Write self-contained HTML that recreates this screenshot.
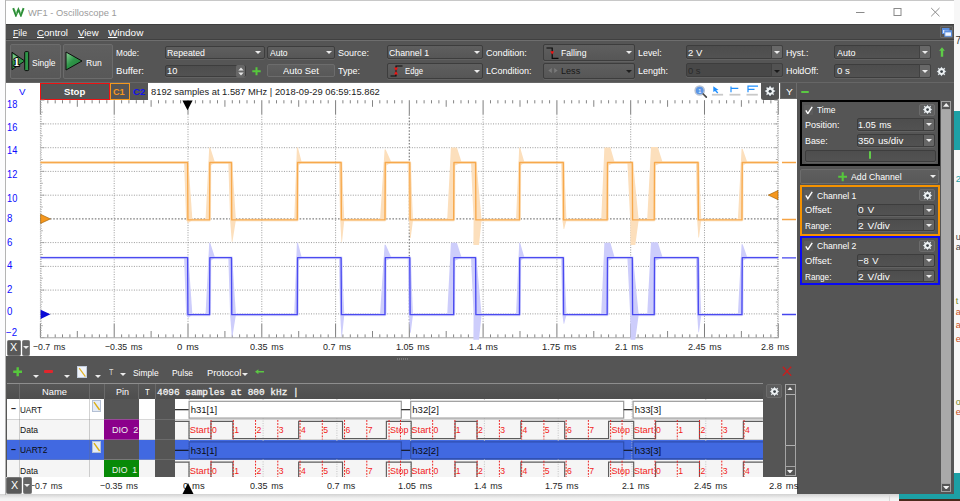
<!DOCTYPE html><html><head><meta charset="utf-8"><title>WF1 - Oscilloscope 1</title><style>
*{box-sizing:border-box;margin:0;padding:0}
html,body{width:960px;height:501px;overflow:hidden;background:#fff;font-family:"Liberation Sans", sans-serif;font-size:9.5px;color:#fff}
.a{position:absolute}
#win{position:absolute;left:6px;top:0;width:948px;height:494.3px;background:#555;overflow:hidden}
.t{position:absolute;white-space:nowrap;line-height:1;transform-origin:0 0}
.btn{position:absolute;background:linear-gradient(#5f5f5f,#585858);border:1px solid #6c6c6c;border-radius:2px}
.cb{position:absolute;background:linear-gradient(#4d4d4d,#525252);border:1px solid #3d3d3d;border-radius:2px;box-shadow:0 1px 0 #626262}
.cbb{position:absolute;background:linear-gradient(#5f5f5f,#565656);border:1px solid #3d3d3d;border-radius:2px;box-shadow:0 1px 0 #626262}
.ar{position:absolute;width:0;height:0;border-left:3.1px solid transparent;border-right:3.1px solid transparent;border-top:3.4px solid #f0f0f0}
</style></head><body>
<div class="a" style="left:0;top:0;width:6px;height:501px;background:#fcfcfd"></div>
<div class="a" style="left:954px;top:0;width:6px;height:501px;background:#f7f7f7"></div>
<div class="a" style="left:0;top:494px;width:960px;height:7px;background:linear-gradient(#d2d2d2,#f0f0f0 60%,#f6f6f6)"></div>
<div class="a" style="left:889px;top:494px;width:1px;height:7px;background:#d8d8d8"></div>
<div class="a" style="left:898.5px;top:494px;width:62px;height:5.3px;background:#1da0a5"></div>
<div class="a" style="left:898.5px;top:499.3px;width:62px;height:2px;background:#4a2a1c"></div>
<div class="a" style="left:954px;top:111px;width:6px;height:39px;background:#1da0a5"></div>
<div class="a" style="left:954px;top:473px;width:6px;height:26.3px;background:#1da0a5"></div>
<div class="t" style="left:955.5px;top:36px;font-size:10px;color:#333">7</div>
<div class="t" style="left:955.8px;top:175px;font-size:9px;color:#1da0a5">2</div>
<div class="t" style="left:955.8px;top:233px;font-size:9px;color:#444">u</div>
<div class="t" style="left:955.8px;top:243px;font-size:9px;color:#444">a</div>
<div class="t" style="left:955.8px;top:297px;font-size:9px;color:#7a8a2a">t</div>
<div class="t" style="left:955.8px;top:308px;font-size:9px;color:#c8501e">a</div>
<div class="t" style="left:955.8px;top:321px;font-size:9px;color:#c8501e">a</div>
<div class="t" style="left:955.8px;top:335px;font-size:9px;color:#c8501e">e</div>
<div class="t" style="left:955.8px;top:398px;font-size:9px;color:#7a8a2a">o</div>
<div class="t" style="left:955.8px;top:408px;font-size:9px;color:#c8501e">e</div>
<div class="a" style="left:5.2px;top:0;width:1px;height:495px;background:#b4b4b4"></div>
<div id="win">
<div class="a" style="left:0px;top:0px;width:948.5px;height:24px;background:#fff"></div>
<div class="a" style="left:0;top:0;width:948.5px;height:1px;background:#c8c8c8"></div>
<div class="t" style="left:21.6px;top:7.76px;font-size:9.5px;color:#9b9b9b;transform:scaleX(0.983);">WF1 - Oscilloscope 1</div>
<svg class="a" style="left:5.5px;top:7px" width="13" height="10" viewBox="0 0 13 10"><path d="M1.2 1.2 L3.9 8.3 L6.4 2.6 L8.9 8.3 L11.6 1.2" fill="none" stroke="#2e8f38" stroke-width="2"/><path d="M3.2 3.2 L4.8 6.8 M8.2 6.6 L9.6 3" stroke="#9ad79a" stroke-width="0.7"/></svg>
<svg class="a" style="left:844px;top:5px" width="95" height="14" viewBox="0 0 95 14"><g stroke="#8a8a8a" stroke-width="1" fill="none"><path d="M6 7.5 H14.5"/><rect x="44" y="3.5" width="7" height="7"/><path d="M81.2 3 L89.5 11.3 M89.5 3 L81.2 11.3"/></g></svg>
<div class="a" style="left:0px;top:24px;width:948.5px;height:16.2px;background:#505050;border-top:1px solid #3e3e3e;border-bottom:1px solid #404040"></div>
<div class="t" style="left:7px;top:28.36px;font-size:9.5px;color:#fff;transform:scaleX(0.915);"><u>F</u>ile</div>
<div class="t" style="left:31px;top:28.36px;font-size:9.5px;color:#fff;transform:scaleX(1.012);"><u>C</u>ontrol</div>
<div class="t" style="left:72.2px;top:28.36px;font-size:9.5px;color:#fff;transform:scaleX(1.009);"><u>V</u>iew</div>
<div class="t" style="left:102px;top:28.36px;font-size:9.5px;color:#fff;transform:scaleX(1.045);"><u>W</u>indow</div>
<div class="a" style="left:934px;top:26px;width:13px;height:11.6px;background:#555;border:1px solid #6a6a6a;border-radius:1px"></div>
<svg class="a" style="left:936px;top:27.5px" width="10" height="9" viewBox="0 0 10 9"><rect x="0.5" y="0.5" width="6.5" height="5" fill="#dbe7fb" stroke="#5b8fe0"/><rect x="0.5" y="0.5" width="6.5" height="1.5" fill="#5b8fe0"/><rect x="2.8" y="2.8" width="6.7" height="5.5" fill="#f2f6fd" stroke="#5b8fe0"/><rect x="2.8" y="2.8" width="6.7" height="1.6" fill="#5b8fe0"/></svg>
<div class="a" style="left:0px;top:40.2px;width:948.5px;height:43.1px;background:#555;border-top:1px solid #6e6e6e;border-bottom:1px solid #666"></div>
<div class="btn" style="left:3.8px;top:44px;width:51.6px;height:34.8px;"></div>
<div class="btn" style="left:57.2px;top:44px;width:49.8px;height:34.8px;"></div>
<div class="t" style="left:26px;top:57.56px;font-size:9.5px;color:#fff;transform:scaleX(0.890);">Single</div>
<div class="t" style="left:80.3px;top:57.56px;font-size:9.5px;color:#fff;transform:scaleX(0.901);">Run</div>
<svg class="a" style="left:4.5px;top:49px" width="20" height="24" viewBox="0 0 20 24"><path d="M1 3.3 L13.7 12 L1 20.7 Z" fill="#2e9548" stroke="#0c0c0c" stroke-width="1"/><path d="M1.8 5 L8 9.2 L1.8 12 Z" fill="#8fd39a" opacity="0.75"/><rect x="13.7" y="2.6" width="4" height="19" rx="0.9" fill="#2e9548" stroke="#0c0c0c" stroke-width="1"/><text x="2.2" y="16.6" font-family='"Liberation Serif",serif' font-weight="bold" font-size="13" fill="#fff" stroke="#0a0a0a" stroke-width="2" stroke-linejoin="round" paint-order="stroke">1</text></svg>
<svg class="a" style="left:59px;top:51px" width="19" height="20" viewBox="0 0 19 20"><defs><linearGradient id="gr" x1="0" y1="0" x2="1" y2="1"><stop offset="0" stop-color="#8fd39a"/><stop offset="0.45" stop-color="#2e9548"/><stop offset="1" stop-color="#237a38"/></linearGradient></defs><path d="M1 1 L17 10 L1 19 Z" fill="url(#gr)" stroke="#0c0c0c" stroke-width="1"/></svg>
<div class="t" style="left:110px;top:47.76px;font-size:9.5px;color:#fff;transform:scaleX(0.871);">Mode:</div>
<div class="t" style="left:110px;top:66.26px;font-size:9.5px;color:#fff;transform:scaleX(1.007);">Buffer:</div>
<div class="cbb" style="left:158.7px;top:45.6px;width:100.3px;height:13.2px;"></div>
<div class="t" style="left:161px;top:47.76px;font-size:9.5px;color:#fff;transform:scaleX(0.922);">Repeated</div>
<div class="ar" style="left:249.4px;top:51.3px;border-top-color:#ececec"></div>
<div class="cb" style="left:158.7px;top:64.6px;width:81.1px;height:12.6px;"></div>
<div class="t" style="left:160.7px;top:66.26px;font-size:9.5px;color:#fff;transform:scaleX(0.975);">10</div>
<div class="a" style="left:229.8px;top:65.2px;width:9.4px;height:11.4px;background:#666;border-radius:1.5px"></div>
<svg class="a" style="left:231.5px;top:66.5px" width="6" height="9" viewBox="0 0 6 9"><path d="M0.3 3.4 L3 0.6 L5.7 3.4 Z M0.3 5.6 L3 8.4 L5.7 5.6 Z" fill="#e4e4e4"/></svg>
<svg class="a" style="left:245.5px;top:67.3px" width="9" height="8.5" viewBox="0 0 9 8.5"><path d="M4.5 0.2 V8.3 M0.3 4.25 H8.7" stroke="#56c83c" stroke-width="2"/></svg>
<div class="cbb" style="left:261px;top:45.6px;width:68.3px;height:13.2px;"></div>
<div class="t" style="left:264px;top:47.76px;font-size:9.5px;color:#fff;transform:scaleX(0.896);">Auto</div>
<div class="ar" style="left:320.1px;top:51.3px;border-top-color:#ececec"></div>
<div class="btn" style="left:261px;top:64.2px;width:68.3px;height:13.3px;"></div>
<div class="t" style="left:277.3px;top:66.26px;font-size:9.5px;color:#fff;transform:scaleX(0.985);">Auto Set</div>
<div class="t" style="left:332px;top:47.76px;font-size:9.5px;color:#fff;transform:scaleX(0.947);">Source:</div>
<div class="t" style="left:332px;top:66.26px;font-size:9.5px;color:#fff;transform:scaleX(0.947);">Type:</div>
<div class="cbb" style="left:381px;top:45.4px;width:96.3px;height:13.4px;"></div>
<div class="t" style="left:383.2px;top:47.76px;font-size:9.5px;color:#fff;transform:scaleX(0.924);">Channel 1</div>
<div class="ar" style="left:467.9px;top:51.3px;border-top-color:#ececec"></div>
<div class="cbb" style="left:381px;top:63px;width:96.3px;height:15.6px;"></div>
<div class="t" style="left:399px;top:66.26px;font-size:9.5px;color:#fff;transform:scaleX(0.811);">Edge</div>
<div class="ar" style="left:467.9px;top:70px;border-top-color:#ececec"></div>
<svg class="a" style="left:384.3px;top:65px" width="13" height="12" viewBox="0 0 13 12"><path d="M0.5 11 H6 V1 H12.5" fill="none" stroke="#0a0a0a" stroke-width="1.1"/><path d="M4 2.6 H8 L6 6 Z M4 9.4 H8 L6 6 Z" fill="#f01414"/></svg>
<div class="t" style="left:479.8px;top:47.76px;font-size:9.5px;color:#fff;transform:scaleX(0.956);">Condition:</div>
<div class="t" style="left:479.8px;top:66.26px;font-size:9.5px;color:#fff;transform:scaleX(0.947);">LCondition:</div>
<div class="cbb" style="left:537px;top:44.2px;width:92.3px;height:16.4px;"></div>
<div class="t" style="left:554.8px;top:47.76px;font-size:9.5px;color:#fff;transform:scaleX(0.911);">Falling</div>
<div class="ar" style="left:619.9px;top:51.3px;border-top-color:#ececec"></div>
<svg class="a" style="left:540.3px;top:46.5px" width="13" height="12.5" viewBox="0 0 13 12.5"><path d="M0.5 1 H6.2 V11.3 H12.5" fill="none" stroke="#0a0a0a" stroke-width="1.2"/><path d="M4.2 4.2 H8.2 L6.2 7.6 Z" fill="#f01414"/></svg>
<div class="cbb" style="left:537px;top:63px;width:92.3px;height:16.2px;"></div>
<div class="t" style="left:554.8px;top:66.26px;font-size:9.5px;color:#181818;transform:scaleX(0.957);">Less</div>
<div class="ar" style="left:619.9px;top:70px;border-top-color:#1e1e1e"></div>
<svg class="a" style="left:541.5px;top:66.5px" width="10" height="7" viewBox="0 0 10 7"><path d="M0.3 3.5 L3.8 1 V6 Z M9.7 3.5 L6.2 1 V6 Z" fill="#7a7a7a"/></svg>
<div class="t" style="left:632px;top:47.76px;font-size:9.5px;color:#fff;transform:scaleX(0.935);">Level:</div>
<div class="t" style="left:632px;top:66.26px;font-size:9.5px;color:#fff;transform:scaleX(0.947);">Length:</div>
<div class="cb" style="left:679.8px;top:45.3px;width:97.5px;height:13.9px;"></div>
<div class="t" style="left:682.3px;top:47.76px;font-size:9.5px;color:#fff;transform:scaleX(0.996);">2 V</div>
<div class="a" style="left:764.8px;top:45.3px;width:12.5px;height:13.9px;background:#686868;border:1px solid #414141;border-radius:0 2px 2px 0"></div>
<div class="ar" style="left:767.9px;top:51.3px;border-top-color:#ececec"></div>
<div class="cb" style="left:679.8px;top:63.3px;width:97.5px;height:14.2px;background:#484848"></div>
<div class="t" style="left:682.3px;top:66.26px;font-size:9.5px;color:#2a2a2a;transform:scaleX(0.986);">0 s</div>
<div class="a" style="left:764.8px;top:63.3px;width:12.5px;height:14.2px;background:#525252;border:1px solid #414141;border-radius:0 2px 2px 0"></div>
<div class="ar" style="left:767.9px;top:69.5px;border-top-color:#1a1a1a"></div>
<div class="t" style="left:779.8px;top:47.76px;font-size:9.5px;color:#fff;transform:scaleX(0.927);">Hyst.:</div>
<div class="t" style="left:779.8px;top:66.26px;font-size:9.5px;color:#fff;transform:scaleX(0.937);">HoldOff:</div>
<div class="cb" style="left:828.3px;top:45.1px;width:96.7px;height:14.3px;"></div>
<div class="t" style="left:830.5px;top:47.76px;font-size:9.5px;color:#fff;transform:scaleX(0.947);">Auto</div>
<div class="a" style="left:913px;top:45.1px;width:12px;height:14.3px;background:#686868;border:1px solid #414141;border-radius:0 2px 2px 0"></div>
<div class="ar" style="left:915.9px;top:51.3px;border-top-color:#ececec"></div>
<div class="cb" style="left:828.3px;top:63.6px;width:96.7px;height:14.2px;"></div>
<div class="t" style="left:830.5px;top:66.26px;font-size:9.5px;color:#fff;transform:scaleX(1.018);">0 s</div>
<div class="a" style="left:913px;top:63.6px;width:12px;height:14.2px;background:#686868;border:1px solid #414141;border-radius:0 2px 2px 0"></div>
<div class="ar" style="left:915.9px;top:69.8px;border-top-color:#ececec"></div>
<svg class="a" style="left:932.6px;top:46.8px" width="6" height="10" viewBox="0 0 6 10"><path d="M3 0.2 L5.9 3.8 H4.2 V9.8 H1.8 V3.8 H0.1 Z" fill="#5ecb48"/></svg>
<svg class="a" style="left:930px;top:65.6px" width="11" height="11" viewBox="0 0 13.2 13.4"><path d="M5.46 2.35 L5.51 0.90 L7.69 0.90 L7.74 2.35 L8.88 2.82 L9.93 1.83 L11.47 3.37 L10.48 4.42 L10.95 5.56 L12.40 5.61 L12.40 7.79 L10.95 7.84 L10.48 8.98 L11.47 10.03 L9.93 11.57 L8.88 10.58 L7.74 11.05 L7.69 12.50 L5.51 12.50 L5.46 11.05 L4.32 10.58 L3.27 11.57 L1.73 10.03 L2.72 8.98 L2.25 7.84 L0.80 7.79 L0.80 5.61 L2.25 5.56 L2.72 4.42 L1.73 3.37 L3.27 1.83 L4.32 2.82 Z" fill="#edf1f3" stroke="#2a2f33" stroke-width="0.6" stroke-linejoin="round"/><circle cx="6.7" cy="6.8" r="1.7" fill="#3b4348"/></svg>
<div class="a" style="left:0px;top:83.3px;width:791px;height:273.7px;background:#fff"></div>
<div class="t" style="left:13.3px;top:86.7px;font-size:9.8px;color:#0c0cff;transform:scaleX(0.994);">V</div>
<div class="a" style="left:34.3px;top:83.3px;width:69.7px;height:17.1px;background:#555;border:1.2px solid #ee1111"></div>
<div class="t" style="left:58.2px;top:87.46px;font-size:9.5px;color:#fff;font-weight:bold;transform:scaleX(1.009);">Stop</div>
<div class="a" style="left:103.7px;top:83.3px;width:20px;height:17.1px;background:#555;border:1.2px solid #f5971d"></div>
<div class="t" style="left:107.3px;top:87.46px;font-size:9.5px;color:#f5971d;font-weight:bold;transform:scaleX(0.963);">C1</div>
<div class="a" style="left:123.7px;top:83.3px;width:18.6px;height:17.1px;background:#555"></div>
<div class="t" style="left:126.5px;top:87.46px;font-size:9.5px;color:#1010f0;font-weight:bold;transform:scaleX(1.005);">C2</div>
<div class="t" style="left:144.8px;top:87.46px;font-size:9.5px;color:#1a1a1a;transform:scaleX(0.983);">8192 samples at 1.587 MHz | 2018-09-29 06:59:15.862</div>
<svg class="a" style="left:686px;top:84px" width="70" height="16" viewBox="0 0 70 16"><circle cx="7.7" cy="6.5" r="4.6" fill="#5c96e6" stroke="#b9c3d2" stroke-width="1.5"/><path d="M11.2 10 L14.3 13.2" stroke="#4a4a4a" stroke-width="1.7" stroke-linecap="round"/><text x="6.3" y="8.5" font-size="5.5" fill="#fff" font-family='"Liberation Sans", sans-serif'>1</text><path d="M21.3 2.3 L21.3 8 L23 6.9 L25.3 9.4 L26.3 8.6 L24.2 6.2 L26.6 5.9 Z" fill="#1e8fff"/><path d="M19.9 10.7 H31.1" stroke="#c9c9c9" stroke-width="1.8"/><path d="M39 2.5 V8.2 M39 4.3 H46.3" stroke="#1e8fff" stroke-width="1.2" fill="none"/><path d="M37.5 10.7 H48.4" stroke="#c9c9c9" stroke-width="1.8"/><path d="M56 1.6 V8.2 M56 2.2 H66 M56 5.4 H62.5" stroke="#1e8fff" stroke-width="1.2" fill="none"/><path d="M54.5 10.7 H65.8" stroke="#c9c9c9" stroke-width="1.8"/></svg>
<div class="a" style="left:755.2px;top:83.3px;width:17.8px;height:16.9px;background:#555;border-radius:0 0 2.5px 2.5px"></div>
<svg class="a" style="left:757.6px;top:85.2px" width="12.2" height="12.2" viewBox="0 0 13.2 13.4"><path d="M5.46 2.35 L5.51 0.90 L7.69 0.90 L7.74 2.35 L8.88 2.82 L9.93 1.83 L11.47 3.37 L10.48 4.42 L10.95 5.56 L12.40 5.61 L12.40 7.79 L10.95 7.84 L10.48 8.98 L11.47 10.03 L9.93 11.57 L8.88 10.58 L7.74 11.05 L7.69 12.50 L5.51 12.50 L5.46 11.05 L4.32 10.58 L3.27 11.57 L1.73 10.03 L2.72 8.98 L2.25 7.84 L0.80 7.79 L0.80 5.61 L2.25 5.56 L2.72 4.42 L1.73 3.37 L3.27 1.83 L4.32 2.82 Z" fill="#edf1f3" stroke="#2a2f33" stroke-width="0.6" stroke-linejoin="round"/><circle cx="6.7" cy="6.8" r="1.7" fill="#3b4348"/></svg>
<div class="a" style="left:773.8px;top:83.3px;width:17px;height:16.2px;background:#555;border:1px solid #6c6c6c;border-top:none"></div>
<div class="t" style="left:780.3px;top:87.51px;font-size:9.2px;color:#fff;transform:scaleX(1.108);">Y</div>
<svg class="a" style="left:0px;top:83.3px" width="791" height="273.7" viewBox="6 83.3 791 273.7"><path d="M40.4 124.2 H778.3" stroke="#9a9a9a" stroke-width="1" stroke-dasharray="1 1.46" fill="none"/><path d="M40.4 148 H778.3" stroke="#9a9a9a" stroke-width="1" stroke-dasharray="1 1.46" fill="none"/><path d="M40.4 171.7 H778.3" stroke="#9a9a9a" stroke-width="1" stroke-dasharray="1 1.46" fill="none"/><path d="M40.4 195.5 H778.3" stroke="#9a9a9a" stroke-width="1" stroke-dasharray="1 1.46" fill="none"/><path d="M40.4 219.2 H778.3" stroke="#808080" stroke-width="1.2" stroke-dasharray="1.6 1.6" fill="none"/><path d="M40.4 242.9 H778.3" stroke="#9a9a9a" stroke-width="1" stroke-dasharray="1 1.46" fill="none"/><path d="M40.4 266.7 H778.3" stroke="#9a9a9a" stroke-width="1" stroke-dasharray="1 1.46" fill="none"/><path d="M40.4 290.4 H778.3" stroke="#9a9a9a" stroke-width="1" stroke-dasharray="1 1.46" fill="none"/><path d="M40.4 314.2 H778.3" stroke="#9a9a9a" stroke-width="1" stroke-dasharray="1 1.46" fill="none"/><path d="M40.4 100.5 v14 M40.4 337.9 v-14" stroke="#7c7c7c" stroke-width="1" fill="none"/><path d="M114.2 114.5 V323.9" stroke="#9a9a9a" stroke-width="1" stroke-dasharray="1 1.46" fill="none"/><path d="M114.2 100.5 v14 M114.2 337.9 v-14" stroke="#7c7c7c" stroke-width="1" fill="none"/><path d="M188 114.5 V323.9" stroke="#9a9a9a" stroke-width="1" stroke-dasharray="1 1.46" fill="none"/><path d="M188 100.5 v14 M188 337.9 v-14" stroke="#7c7c7c" stroke-width="1" fill="none"/><path d="M261.8 114.5 V323.9" stroke="#9a9a9a" stroke-width="1" stroke-dasharray="1 1.46" fill="none"/><path d="M261.8 100.5 v14 M261.8 337.9 v-14" stroke="#7c7c7c" stroke-width="1" fill="none"/><path d="M335.6 114.5 V323.9" stroke="#9a9a9a" stroke-width="1" stroke-dasharray="1 1.46" fill="none"/><path d="M335.6 100.5 v14 M335.6 337.9 v-14" stroke="#7c7c7c" stroke-width="1" fill="none"/><path d="M409.3 114.5 V323.9" stroke="#808080" stroke-width="1.2" stroke-dasharray="1.6 1.6" fill="none"/><path d="M409.3 100.5 v14 M409.3 337.9 v-14" stroke="#7c7c7c" stroke-width="1" fill="none"/><path d="M483.1 114.5 V323.9" stroke="#9a9a9a" stroke-width="1" stroke-dasharray="1 1.46" fill="none"/><path d="M483.1 100.5 v14 M483.1 337.9 v-14" stroke="#7c7c7c" stroke-width="1" fill="none"/><path d="M556.9 114.5 V323.9" stroke="#9a9a9a" stroke-width="1" stroke-dasharray="1 1.46" fill="none"/><path d="M556.9 100.5 v14 M556.9 337.9 v-14" stroke="#7c7c7c" stroke-width="1" fill="none"/><path d="M630.7 114.5 V323.9" stroke="#9a9a9a" stroke-width="1" stroke-dasharray="1 1.46" fill="none"/><path d="M630.7 100.5 v14 M630.7 337.9 v-14" stroke="#7c7c7c" stroke-width="1" fill="none"/><path d="M704.5 114.5 V323.9" stroke="#9a9a9a" stroke-width="1" stroke-dasharray="1 1.46" fill="none"/><path d="M704.5 100.5 v14 M704.5 337.9 v-14" stroke="#7c7c7c" stroke-width="1" fill="none"/><path d="M778.3 100.5 v14 M778.3 337.9 v-14" stroke="#7c7c7c" stroke-width="1" fill="none"/><path d="M47.8 100.5 v3.2 M47.8 337.9 v-3.2 M55.2 100.5 v3.2 M55.2 337.9 v-3.2 M62.5 100.5 v3.2 M62.5 337.9 v-3.2 M69.9 100.5 v3.2 M69.9 337.9 v-3.2 M77.3 100.5 v6.6 M77.3 337.9 v-6.6 M84.7 100.5 v3.2 M84.7 337.9 v-3.2 M92.1 100.5 v3.2 M92.1 337.9 v-3.2 M99.4 100.5 v3.2 M99.4 337.9 v-3.2 M106.8 100.5 v3.2 M106.8 337.9 v-3.2 M121.6 100.5 v3.2 M121.6 337.9 v-3.2 M128.9 100.5 v3.2 M128.9 337.9 v-3.2 M136.3 100.5 v3.2 M136.3 337.9 v-3.2 M143.7 100.5 v3.2 M143.7 337.9 v-3.2 M151.1 100.5 v6.6 M151.1 337.9 v-6.6 M158.5 100.5 v3.2 M158.5 337.9 v-3.2 M165.8 100.5 v3.2 M165.8 337.9 v-3.2 M173.2 100.5 v3.2 M173.2 337.9 v-3.2 M180.6 100.5 v3.2 M180.6 337.9 v-3.2 M195.4 100.5 v3.2 M195.4 337.9 v-3.2 M202.7 100.5 v3.2 M202.7 337.9 v-3.2 M210.1 100.5 v3.2 M210.1 337.9 v-3.2 M217.5 100.5 v3.2 M217.5 337.9 v-3.2 M224.9 100.5 v6.6 M224.9 337.9 v-6.6 M232.3 100.5 v3.2 M232.3 337.9 v-3.2 M239.6 100.5 v3.2 M239.6 337.9 v-3.2 M247 100.5 v3.2 M247 337.9 v-3.2 M254.4 100.5 v3.2 M254.4 337.9 v-3.2 M269.1 100.5 v3.2 M269.1 337.9 v-3.2 M276.5 100.5 v3.2 M276.5 337.9 v-3.2 M283.9 100.5 v3.2 M283.9 337.9 v-3.2 M291.3 100.5 v3.2 M291.3 337.9 v-3.2 M298.7 100.5 v6.6 M298.7 337.9 v-6.6 M306 100.5 v3.2 M306 337.9 v-3.2 M313.4 100.5 v3.2 M313.4 337.9 v-3.2 M320.8 100.5 v3.2 M320.8 337.9 v-3.2 M328.2 100.5 v3.2 M328.2 337.9 v-3.2 M342.9 100.5 v3.2 M342.9 337.9 v-3.2 M350.3 100.5 v3.2 M350.3 337.9 v-3.2 M357.7 100.5 v3.2 M357.7 337.9 v-3.2 M365.1 100.5 v3.2 M365.1 337.9 v-3.2 M372.5 100.5 v6.6 M372.5 337.9 v-6.6 M379.8 100.5 v3.2 M379.8 337.9 v-3.2 M387.2 100.5 v3.2 M387.2 337.9 v-3.2 M394.6 100.5 v3.2 M394.6 337.9 v-3.2 M402 100.5 v3.2 M402 337.9 v-3.2 M416.7 100.5 v3.2 M416.7 337.9 v-3.2 M424.1 100.5 v3.2 M424.1 337.9 v-3.2 M431.5 100.5 v3.2 M431.5 337.9 v-3.2 M438.9 100.5 v3.2 M438.9 337.9 v-3.2 M446.2 100.5 v6.6 M446.2 337.9 v-6.6 M453.6 100.5 v3.2 M453.6 337.9 v-3.2 M461 100.5 v3.2 M461 337.9 v-3.2 M468.4 100.5 v3.2 M468.4 337.9 v-3.2 M475.8 100.5 v3.2 M475.8 337.9 v-3.2 M490.5 100.5 v3.2 M490.5 337.9 v-3.2 M497.9 100.5 v3.2 M497.9 337.9 v-3.2 M505.3 100.5 v3.2 M505.3 337.9 v-3.2 M512.7 100.5 v3.2 M512.7 337.9 v-3.2 M520 100.5 v6.6 M520 337.9 v-6.6 M527.4 100.5 v3.2 M527.4 337.9 v-3.2 M534.8 100.5 v3.2 M534.8 337.9 v-3.2 M542.2 100.5 v3.2 M542.2 337.9 v-3.2 M549.6 100.5 v3.2 M549.6 337.9 v-3.2 M564.3 100.5 v3.2 M564.3 337.9 v-3.2 M571.7 100.5 v3.2 M571.7 337.9 v-3.2 M579.1 100.5 v3.2 M579.1 337.9 v-3.2 M586.4 100.5 v3.2 M586.4 337.9 v-3.2 M593.8 100.5 v6.6 M593.8 337.9 v-6.6 M601.2 100.5 v3.2 M601.2 337.9 v-3.2 M608.6 100.5 v3.2 M608.6 337.9 v-3.2 M616 100.5 v3.2 M616 337.9 v-3.2 M623.3 100.5 v3.2 M623.3 337.9 v-3.2 M638.1 100.5 v3.2 M638.1 337.9 v-3.2 M645.5 100.5 v3.2 M645.5 337.9 v-3.2 M652.9 100.5 v3.2 M652.9 337.9 v-3.2 M660.2 100.5 v3.2 M660.2 337.9 v-3.2 M667.6 100.5 v6.6 M667.6 337.9 v-6.6 M675 100.5 v3.2 M675 337.9 v-3.2 M682.4 100.5 v3.2 M682.4 337.9 v-3.2 M689.8 100.5 v3.2 M689.8 337.9 v-3.2 M697.1 100.5 v3.2 M697.1 337.9 v-3.2 M711.9 100.5 v3.2 M711.9 337.9 v-3.2 M719.3 100.5 v3.2 M719.3 337.9 v-3.2 M726.6 100.5 v3.2 M726.6 337.9 v-3.2 M734 100.5 v3.2 M734 337.9 v-3.2 M741.4 100.5 v6.6 M741.4 337.9 v-6.6 M748.8 100.5 v3.2 M748.8 337.9 v-3.2 M756.2 100.5 v3.2 M756.2 337.9 v-3.2 M763.5 100.5 v3.2 M763.5 337.9 v-3.2 M770.9 100.5 v3.2 M770.9 337.9 v-3.2" stroke="#858585" stroke-width="1" fill="none"/><path d="M40.4 100.5 h4 M778.3 100.5 h-4 M40.4 102.9 h1.3 M778.3 102.9 h-1.3 M40.4 105.2 h1.3 M778.3 105.2 h-1.3 M40.4 107.6 h1.3 M778.3 107.6 h-1.3 M40.4 110 h1.3 M778.3 110 h-1.3 M40.4 112.4 h2.4 M778.3 112.4 h-2.4 M40.4 114.7 h1.3 M778.3 114.7 h-1.3 M40.4 117.1 h1.3 M778.3 117.1 h-1.3 M40.4 119.5 h1.3 M778.3 119.5 h-1.3 M40.4 121.9 h1.3 M778.3 121.9 h-1.3 M40.4 124.2 h4 M778.3 124.2 h-4 M40.4 126.6 h1.3 M778.3 126.6 h-1.3 M40.4 129 h1.3 M778.3 129 h-1.3 M40.4 131.4 h1.3 M778.3 131.4 h-1.3 M40.4 133.7 h1.3 M778.3 133.7 h-1.3 M40.4 136.1 h2.4 M778.3 136.1 h-2.4 M40.4 138.5 h1.3 M778.3 138.5 h-1.3 M40.4 140.9 h1.3 M778.3 140.9 h-1.3 M40.4 143.2 h1.3 M778.3 143.2 h-1.3 M40.4 145.6 h1.3 M778.3 145.6 h-1.3 M40.4 148 h4 M778.3 148 h-4 M40.4 150.4 h1.3 M778.3 150.4 h-1.3 M40.4 152.7 h1.3 M778.3 152.7 h-1.3 M40.4 155.1 h1.3 M778.3 155.1 h-1.3 M40.4 157.5 h1.3 M778.3 157.5 h-1.3 M40.4 159.8 h2.4 M778.3 159.8 h-2.4 M40.4 162.2 h1.3 M778.3 162.2 h-1.3 M40.4 164.6 h1.3 M778.3 164.6 h-1.3 M40.4 167 h1.3 M778.3 167 h-1.3 M40.4 169.3 h1.3 M778.3 169.3 h-1.3 M40.4 171.7 h4 M778.3 171.7 h-4 M40.4 174.1 h1.3 M778.3 174.1 h-1.3 M40.4 176.5 h1.3 M778.3 176.5 h-1.3 M40.4 178.8 h1.3 M778.3 178.8 h-1.3 M40.4 181.2 h1.3 M778.3 181.2 h-1.3 M40.4 183.6 h2.4 M778.3 183.6 h-2.4 M40.4 186 h1.3 M778.3 186 h-1.3 M40.4 188.3 h1.3 M778.3 188.3 h-1.3 M40.4 190.7 h1.3 M778.3 190.7 h-1.3 M40.4 193.1 h1.3 M778.3 193.1 h-1.3 M40.4 195.5 h4 M778.3 195.5 h-4 M40.4 197.8 h1.3 M778.3 197.8 h-1.3 M40.4 200.2 h1.3 M778.3 200.2 h-1.3 M40.4 202.6 h1.3 M778.3 202.6 h-1.3 M40.4 205 h1.3 M778.3 205 h-1.3 M40.4 207.3 h2.4 M778.3 207.3 h-2.4 M40.4 209.7 h1.3 M778.3 209.7 h-1.3 M40.4 212.1 h1.3 M778.3 212.1 h-1.3 M40.4 214.5 h1.3 M778.3 214.5 h-1.3 M40.4 216.8 h1.3 M778.3 216.8 h-1.3 M40.4 219.2 h4 M778.3 219.2 h-4 M40.4 221.6 h1.3 M778.3 221.6 h-1.3 M40.4 223.9 h1.3 M778.3 223.9 h-1.3 M40.4 226.3 h1.3 M778.3 226.3 h-1.3 M40.4 228.7 h1.3 M778.3 228.7 h-1.3 M40.4 231.1 h2.4 M778.3 231.1 h-2.4 M40.4 233.4 h1.3 M778.3 233.4 h-1.3 M40.4 235.8 h1.3 M778.3 235.8 h-1.3 M40.4 238.2 h1.3 M778.3 238.2 h-1.3 M40.4 240.6 h1.3 M778.3 240.6 h-1.3 M40.4 242.9 h4 M778.3 242.9 h-4 M40.4 245.3 h1.3 M778.3 245.3 h-1.3 M40.4 247.7 h1.3 M778.3 247.7 h-1.3 M40.4 250.1 h1.3 M778.3 250.1 h-1.3 M40.4 252.4 h1.3 M778.3 252.4 h-1.3 M40.4 254.8 h2.4 M778.3 254.8 h-2.4 M40.4 257.2 h1.3 M778.3 257.2 h-1.3 M40.4 259.6 h1.3 M778.3 259.6 h-1.3 M40.4 261.9 h1.3 M778.3 261.9 h-1.3 M40.4 264.3 h1.3 M778.3 264.3 h-1.3 M40.4 266.7 h4 M778.3 266.7 h-4 M40.4 269.1 h1.3 M778.3 269.1 h-1.3 M40.4 271.4 h1.3 M778.3 271.4 h-1.3 M40.4 273.8 h1.3 M778.3 273.8 h-1.3 M40.4 276.2 h1.3 M778.3 276.2 h-1.3 M40.4 278.5 h2.4 M778.3 278.5 h-2.4 M40.4 280.9 h1.3 M778.3 280.9 h-1.3 M40.4 283.3 h1.3 M778.3 283.3 h-1.3 M40.4 285.7 h1.3 M778.3 285.7 h-1.3 M40.4 288 h1.3 M778.3 288 h-1.3 M40.4 290.4 h4 M778.3 290.4 h-4 M40.4 292.8 h1.3 M778.3 292.8 h-1.3 M40.4 295.2 h1.3 M778.3 295.2 h-1.3 M40.4 297.5 h1.3 M778.3 297.5 h-1.3 M40.4 299.9 h1.3 M778.3 299.9 h-1.3 M40.4 302.3 h2.4 M778.3 302.3 h-2.4 M40.4 304.7 h1.3 M778.3 304.7 h-1.3 M40.4 307 h1.3 M778.3 307 h-1.3 M40.4 309.4 h1.3 M778.3 309.4 h-1.3 M40.4 311.8 h1.3 M778.3 311.8 h-1.3 M40.4 314.2 h4 M778.3 314.2 h-4 M40.4 316.5 h1.3 M778.3 316.5 h-1.3 M40.4 318.9 h1.3 M778.3 318.9 h-1.3 M40.4 321.3 h1.3 M778.3 321.3 h-1.3 M40.4 323.7 h1.3 M778.3 323.7 h-1.3 M40.4 326 h2.4 M778.3 326 h-2.4 M40.4 328.4 h1.3 M778.3 328.4 h-1.3 M40.4 330.8 h1.3 M778.3 330.8 h-1.3 M40.4 333.2 h1.3 M778.3 333.2 h-1.3 M40.4 335.5 h1.3 M778.3 335.5 h-1.3 M40.4 337.9 h4 M778.3 337.9 h-4" stroke="#a0a0a0" stroke-width="0.9" fill="none"/><path d="M40.4 100.5 V337.9 M778.3 100.5 V337.9" stroke="#a8a8a8" stroke-width="0.9" stroke-dasharray="1 1.3" fill="none"/><path d="M40 338.1 H778.7" stroke="#a4a4a4" stroke-width="1" fill="none"/><path d="M184.1 162.8 L188.4 162.8 L192.4 220.2 L188.4 223.2 L188.0 223.2 L186.1 220.2 Z" fill="#fcdfbc"/><path d="M205.5 220.2 L209.2 147.8 L210.2 147.8 L215.0 162.8 L210.7 165.8 L210.7 220.2 Z" fill="#fcdfbc"/><path d="M228.3 162.8 L232.3 162.8 L235.9 220.2 L232.4 242.2 L231.8 242.2 L230.1 220.2 Z" fill="#fcdfbc"/><path d="M294.2 220.2 L296.9 147.8 L297.9 147.8 L301.8 162.8 L298.4 165.8 L298.4 220.2 Z" fill="#fcdfbc"/><path d="M339.0 162.8 L341.9 162.8 L344.3 220.2 L342.0 242.2 L341.4 242.2 L340.2 220.2 Z" fill="#fcdfbc"/><path d="M380.0 220.2 L384.6 149.8 L385.7 149.8 L391.5 162.8 L386.2 165.8 L386.2 220.2 Z" fill="#fcdfbc"/><path d="M407.7 162.8 L410.6 162.8 L413.0 220.2 L410.7 238.2 L410.1 238.2 L408.9 220.2 Z" fill="#fcdfbc"/><path d="M447.2 220.2 L450.9 147.8 L456.9 147.8 L461.7 162.8 L454.9 165.8 L454.9 220.2 Z" fill="#fcdfbc"/><path d="M471.0 162.8 L476.4 162.8 L481.6 220.2 L479.0 245.2 L473.4 245.2 L473.6 220.2 Z" fill="#fcdfbc"/><path d="M516.0 220.2 L519.2 147.8 L520.1 147.8 L524.5 162.8 L520.7 165.8 L520.7 220.2 Z" fill="#fcdfbc"/><path d="M561.2 162.8 L564.1 162.8 L566.5 220.2 L564.2 229.2 L563.6 229.2 L562.4 220.2 Z" fill="#fcdfbc"/><path d="M601.2 220.2 L604.4 147.8 L610.4 147.8 L614.7 162.8 L608.4 165.8 L608.4 220.2 Z" fill="#fcdfbc"/><path d="M627.4 162.8 L633.1 162.8 L638.7 220.2 L635.3 245.2 L630.5 245.2 L630.2 220.2 Z" fill="#fcdfbc"/><path d="M647.2 220.2 L651.0 147.3 L657.8 147.3 L662.7 162.8 L655.4 165.8 L655.4 220.2 Z" fill="#fcdfbc"/><path d="M696.0 162.8 L698.9 162.8 L701.3 220.2 L699.0 237.7 L698.4 237.7 L697.2 220.2 Z" fill="#fcdfbc"/><path d="M737.9 220.2 L741.6 149.3 L742.7 149.3 L747.4 162.8 L743.1 165.8 L743.1 220.2 Z" fill="#fcdfbc"/><path d="M40.4 162.8 L187.6 162.8 L187.9 220.2 L209.53 220.2 L209.83 162.8 L231.46 162.8 L231.76 220.2 L297.25 220.2 L297.55 162.8 L341.11 162.8 L341.41 220.2 L384.97 220.2 L385.27 162.8 L409.8 162.8 L410.1 220.2 L453.66 220.2 L453.96 162.8 L475.59 162.8 L475.89 220.2 L519.45 220.2 L519.75 162.8 L563.31 162.8 L563.61 220.2 L607.17 220.2 L607.47 162.8 L632.3 162.8 L632.6 220.2 L654.23 220.2 L654.53 162.8 L698.09 162.8 L698.39 220.2 L741.95 220.2 L742.25 162.8 L778.3 162.8" fill="none" stroke="#fcdfbc" stroke-width="3" stroke-linejoin="round" opacity="0.6"/><path d="M40.4 162.8 L187.6 162.8 L187.9 220.2 L209.53 220.2 L209.83 162.8 L231.46 162.8 L231.76 220.2 L297.25 220.2 L297.55 162.8 L341.11 162.8 L341.41 220.2 L384.97 220.2 L385.27 162.8 L409.8 162.8 L410.1 220.2 L453.66 220.2 L453.96 162.8 L475.59 162.8 L475.89 220.2 L519.45 220.2 L519.75 162.8 L563.31 162.8 L563.61 220.2 L607.17 220.2 L607.47 162.8 L632.3 162.8 L632.6 220.2 L654.23 220.2 L654.53 162.8 L698.09 162.8 L698.39 220.2 L741.95 220.2 L742.25 162.8 L778.3 162.8" fill="none" stroke="#f7a94c" stroke-width="1.35" stroke-linejoin="round"/><path d="M184.1 258.0 L188.4 258.0 L192.4 315.0 L188.4 318.0 L188.0 318.0 L186.1 315.0 Z" fill="#cdcdfb"/><path d="M205.5 315.0 L209.2 243.0 L210.2 243.0 L215.0 258.0 L210.7 261.0 L210.7 315.0 Z" fill="#cdcdfb"/><path d="M228.3 258.0 L232.3 258.0 L235.9 315.0 L232.4 337.0 L231.8 337.0 L230.1 315.0 Z" fill="#cdcdfb"/><path d="M294.2 315.0 L296.9 243.0 L297.9 243.0 L301.8 258.0 L298.4 261.0 L298.4 315.0 Z" fill="#cdcdfb"/><path d="M339.0 258.0 L341.9 258.0 L344.3 315.0 L342.0 337.0 L341.4 337.0 L340.2 315.0 Z" fill="#cdcdfb"/><path d="M380.0 315.0 L384.6 245.0 L385.7 245.0 L391.5 258.0 L386.2 261.0 L386.2 315.0 Z" fill="#cdcdfb"/><path d="M407.7 258.0 L410.6 258.0 L413.0 315.0 L410.7 333.0 L410.1 333.0 L408.9 315.0 Z" fill="#cdcdfb"/><path d="M447.2 315.0 L450.9 243.0 L456.9 243.0 L461.7 258.0 L454.9 261.0 L454.9 315.0 Z" fill="#cdcdfb"/><path d="M471.0 258.0 L476.4 258.0 L481.6 315.0 L479.0 340.0 L473.4 340.0 L473.6 315.0 Z" fill="#cdcdfb"/><path d="M516.0 315.0 L519.2 243.0 L520.1 243.0 L524.5 258.0 L520.7 261.0 L520.7 315.0 Z" fill="#cdcdfb"/><path d="M561.2 258.0 L564.1 258.0 L566.5 315.0 L564.2 324.0 L563.6 324.0 L562.4 315.0 Z" fill="#cdcdfb"/><path d="M601.2 315.0 L604.4 243.0 L610.4 243.0 L614.7 258.0 L608.4 261.0 L608.4 315.0 Z" fill="#cdcdfb"/><path d="M627.4 258.0 L633.1 258.0 L638.7 315.0 L635.3 340.0 L630.5 340.0 L630.2 315.0 Z" fill="#cdcdfb"/><path d="M647.2 315.0 L651.0 242.5 L657.8 242.5 L662.7 258.0 L655.4 261.0 L655.4 315.0 Z" fill="#cdcdfb"/><path d="M696.0 258.0 L698.9 258.0 L701.3 315.0 L699.0 332.5 L698.4 332.5 L697.2 315.0 Z" fill="#cdcdfb"/><path d="M737.9 315.0 L741.6 244.5 L742.7 244.5 L747.4 258.0 L743.1 261.0 L743.1 315.0 Z" fill="#cdcdfb"/><path d="M40.4 258 L187.6 258 L187.9 315 L209.53 315 L209.83 258 L231.46 258 L231.76 315 L297.25 315 L297.55 258 L341.11 258 L341.41 315 L384.97 315 L385.27 258 L409.8 258 L410.1 315 L453.66 315 L453.96 258 L475.59 258 L475.89 315 L519.45 315 L519.75 258 L563.31 258 L563.61 315 L607.17 315 L607.47 258 L632.3 258 L632.6 315 L654.23 315 L654.53 258 L698.09 258 L698.39 315 L741.95 315 L742.25 258 L778.3 258" fill="none" stroke="#cdcdfb" stroke-width="3" stroke-linejoin="round" opacity="0.6"/><path d="M40.4 258 L187.6 258 L187.9 315 L209.53 315 L209.83 258 L231.46 258 L231.76 315 L297.25 315 L297.55 258 L341.11 258 L341.41 315 L384.97 315 L385.27 258 L409.8 258 L410.1 315 L453.66 315 L453.96 258 L475.59 258 L475.89 315 L519.45 315 L519.75 258 L563.31 258 L563.61 315 L607.17 315 L607.47 258 L632.3 258 L632.6 315 L654.23 315 L654.53 258 L698.09 258 L698.39 315 L741.95 315 L742.25 258 L778.3 258" fill="none" stroke="#4a4af0" stroke-width="1.35" stroke-linejoin="round"/><path d="M40.6 214.6 L50.4 219.2 L40.6 223.8 Z" fill="#f5971d" stroke="#9a5a00" stroke-width="0.6"/><path d="M40.6 310 L50.4 314.6 L40.6 319.2 Z" fill="#0a0ad6"/><path d="M778 190.8 L768.3 195.4 L778 200 Z" fill="#f5971d" stroke="#9a5a00" stroke-width="0.6"/><path d="M182.4 100.7 L192.6 100.7 L187.5 110.5 Z" fill="#000"/><path d="M782 162.8 H796 M782 219.8 H796" stroke="#f6a445" stroke-width="1.3"/><path d="M782 258.2 H796 M782 314.8 H796" stroke="#4646ee" stroke-width="1.3"/></svg>
<div class="t" style="left:0.7px;top:100.47px;font-size:10.2px;color:#0c0cff;transform:scaleX(0.908);">18</div>
<div class="t" style="left:0.7px;top:122.87px;font-size:10.2px;color:#0c0cff;transform:scaleX(0.908);">16</div>
<div class="t" style="left:0.7px;top:146.37px;font-size:10.2px;color:#0c0cff;transform:scaleX(0.908);">14</div>
<div class="t" style="left:0.7px;top:170.07px;font-size:10.2px;color:#0c0cff;transform:scaleX(0.908);">12</div>
<div class="t" style="left:0.7px;top:193.77px;font-size:10.2px;color:#0c0cff;transform:scaleX(0.908);">10</div>
<div class="t" style="left:0.7px;top:214.07px;font-size:10.2px;color:#0c0cff;transform:scaleX(0.952);">8</div>
<div class="t" style="left:0.7px;top:237.67px;font-size:10.2px;color:#0c0cff;transform:scaleX(0.952);">6</div>
<div class="t" style="left:0.7px;top:261.37px;font-size:10.2px;color:#0c0cff;transform:scaleX(0.952);">4</div>
<div class="t" style="left:0.7px;top:285.07px;font-size:10.2px;color:#0c0cff;transform:scaleX(0.952);">2</div>
<div class="t" style="left:0.7px;top:306.77px;font-size:10.2px;color:#0c0cff;transform:scaleX(0.952);">0</div>
<div class="t" style="left:-0.4px;top:328.37px;font-size:10.2px;color:#0c0cff;transform:scaleX(0.946);">−2</div>
<div class="t" style="left:26.5px;top:343.03px;font-size:9.3px;color:#1e1e1e;transform:scaleX(0.936);word-spacing:1.2px;">−0.7 ms</div>
<div class="t" style="left:98.5px;top:343.03px;font-size:9.3px;color:#1e1e1e;transform:scaleX(0.943);word-spacing:1.2px;">−0.35 ms</div>
<div class="t" style="left:170.7px;top:343.03px;font-size:9.3px;color:#1e1e1e;transform:scaleX(1.022);word-spacing:1.2px;">0 ms</div>
<div class="t" style="left:244px;top:343.03px;font-size:9.3px;color:#1e1e1e;transform:scaleX(0.976);word-spacing:1.2px;">0.35 ms</div>
<div class="t" style="left:317.3px;top:343.03px;font-size:9.3px;color:#1e1e1e;transform:scaleX(0.957);word-spacing:1.2px;">0.7 ms</div>
<div class="t" style="left:390px;top:343.03px;font-size:9.3px;color:#1e1e1e;transform:scaleX(0.976);word-spacing:1.2px;">1.05 ms</div>
<div class="t" style="left:463.3px;top:343.03px;font-size:9.3px;color:#1e1e1e;transform:scaleX(0.993);word-spacing:1.2px;">1.4 ms</div>
<div class="t" style="left:535.7px;top:343.03px;font-size:9.3px;color:#1e1e1e;transform:scaleX(1.007);word-spacing:1.2px;">1.75 ms</div>
<div class="t" style="left:609.3px;top:343.03px;font-size:9.3px;color:#1e1e1e;transform:scaleX(0.967);word-spacing:1.2px;">2.1 ms</div>
<div class="t" style="left:682px;top:343.03px;font-size:9.3px;color:#1e1e1e;transform:scaleX(0.976);word-spacing:1.2px;">2.45 ms</div>
<div class="t" style="left:755px;top:343.03px;font-size:9.3px;color:#1e1e1e;transform:scaleX(0.967);word-spacing:1.2px;">2.8 ms</div>
<div class="a" style="left:0.7px;top:339.6px;width:14.1px;height:16px;background:#585858;border:1px solid #777;border-radius:1.5px"></div>
<div class="t" style="left:4px;top:342.74px;font-size:10px;color:#fff;transform:scaleX(1.079);">X</div>
<div class="a" style="left:16.2px;top:339.6px;width:8.3px;height:16px;background:#646464;border:1px solid #7c7c7c;border-radius:1.5px"></div>
<div class="ar" style="left:17.3px;top:346.3px;border-top-color:#ececec"></div>
<div class="a" style="left:791px;top:83.3px;width:157.5px;height:411px;background:#555"></div>
<div class="a" style="left:795px;top:91.2px;width:8.3px;height:2.2px;background:#5bc843;border-radius:1px"></div>
<div class="a" style="left:794.2px;top:100.3px;width:139.6px;height:66px;border:2.6px solid #000;background:#555"></div>
<div class="a" style="left:797.6px;top:104.7px;width:9.6px;height:10.2px;background:#5c5c5c;border-radius:1px"></div>
<svg class="a" style="left:798.6px;top:105.7px" width="8" height="8.6" viewBox="0 0 8 8.6"><path d="M0.8 4.4 L2.8 7.6 L7.2 0.8" fill="none" stroke="#fff" stroke-width="1.4"/></svg>
<div class="t" style="left:811.3px;top:105.26px;font-size:9.5px;color:#fff;transform:scaleX(0.891);">Time</div>
<div class="btn" style="left:913px;top:103.7px;width:16.4px;height:12px;background:#5e5e5e"></div>
<svg class="a" style="left:916px;top:104.1px" width="11" height="11" viewBox="0 0 13.2 13.4"><path d="M5.46 2.35 L5.51 0.90 L7.69 0.90 L7.74 2.35 L8.88 2.82 L9.93 1.83 L11.47 3.37 L10.48 4.42 L10.95 5.56 L12.40 5.61 L12.40 7.79 L10.95 7.84 L10.48 8.98 L11.47 10.03 L9.93 11.57 L8.88 10.58 L7.74 11.05 L7.69 12.50 L5.51 12.50 L5.46 11.05 L4.32 10.58 L3.27 11.57 L1.73 10.03 L2.72 8.98 L2.25 7.84 L0.80 7.79 L0.80 5.61 L2.25 5.56 L2.72 4.42 L1.73 3.37 L3.27 1.83 L4.32 2.82 Z" fill="#edf1f3" stroke="#2a2f33" stroke-width="0.6" stroke-linejoin="round"/><circle cx="6.7" cy="6.8" r="1.7" fill="#3b4348"/></svg>
<div class="t" style="left:798.6px;top:120.01px;font-size:9.5px;color:#fff;transform:scaleX(0.944);">Position:</div>
<div class="cb" style="left:850.7px;top:118.3px;width:78.7px;height:12.7px;"></div>
<div class="t" style="left:852.3px;top:120.01px;font-size:9.5px;color:#fff;transform:scaleX(0.956);word-spacing:1px;">1.05 ms</div>
<div class="a" style="left:917.3px;top:118.3px;width:12.1px;height:12.7px;background:#666;border:1px solid #3d3d3d;border-radius:0 2px 2px 0"></div>
<div class="ar" style="left:920.4px;top:123.25px;border-top-color:#ececec"></div>
<div class="t" style="left:798.6px;top:135.71px;font-size:9.5px;color:#fff;transform:scaleX(0.930);">Base:</div>
<div class="cb" style="left:850.7px;top:134px;width:78.7px;height:12.7px;"></div>
<div class="t" style="left:852.3px;top:135.71px;font-size:9.5px;color:#fff;transform:scaleX(1.021);word-spacing:1px;">350 us/div</div>
<div class="a" style="left:917.3px;top:134px;width:12.1px;height:12.7px;background:#666;border:1px solid #3d3d3d;border-radius:0 2px 2px 0"></div>
<div class="ar" style="left:920.4px;top:138.95px;border-top-color:#ececec"></div>
<div class="cb" style="left:798.5px;top:149.5px;width:131px;height:12.5px;"></div>
<div class="a" style="left:862.5px;top:151.3px;width:2.1px;height:7.9px;background:#62cc4a;border-radius:1px"></div>
<div class="btn" style="left:794.4px;top:169px;width:139px;height:15.3px;"></div>
<svg class="a" style="left:832px;top:172.2px" width="9.4" height="9.4" viewBox="0 0 9.4 9.4"><path d="M4.7 0.2 V9.2 M0.2 4.7 H9.2" stroke="#56c83c" stroke-width="2.1"/></svg>
<div class="t" style="left:845px;top:172.16px;font-size:9.5px;color:#fff;transform:scaleX(0.921);">Add Channel</div>
<div class="ar" style="left:924.1px;top:175.4px;border-top-color:#ececec"></div>
<div class="a" style="left:794.2px;top:185.4px;width:139.6px;height:50.3px;border:2.2px solid #f59200;background:#555"></div>
<div class="a" style="left:797.6px;top:190.4px;width:9.6px;height:10.2px;background:#5c5c5c;border-radius:1px"></div>
<svg class="a" style="left:798.6px;top:191.4px" width="8" height="8.6" viewBox="0 0 8 8.6"><path d="M0.8 4.4 L2.8 7.6 L7.2 0.8" fill="none" stroke="#fff" stroke-width="1.4"/></svg>
<div class="t" style="left:811.3px;top:190.96px;font-size:9.5px;color:#fff;transform:scaleX(0.910);">Channel 1</div>
<div class="btn" style="left:913px;top:189.4px;width:16.4px;height:12px;background:#5e5e5e"></div>
<svg class="a" style="left:916px;top:189.8px" width="11" height="11" viewBox="0 0 13.2 13.4"><path d="M5.46 2.35 L5.51 0.90 L7.69 0.90 L7.74 2.35 L8.88 2.82 L9.93 1.83 L11.47 3.37 L10.48 4.42 L10.95 5.56 L12.40 5.61 L12.40 7.79 L10.95 7.84 L10.48 8.98 L11.47 10.03 L9.93 11.57 L8.88 10.58 L7.74 11.05 L7.69 12.50 L5.51 12.50 L5.46 11.05 L4.32 10.58 L3.27 11.57 L1.73 10.03 L2.72 8.98 L2.25 7.84 L0.80 7.79 L0.80 5.61 L2.25 5.56 L2.72 4.42 L1.73 3.37 L3.27 1.83 L4.32 2.82 Z" fill="#edf1f3" stroke="#2a2f33" stroke-width="0.6" stroke-linejoin="round"/><circle cx="6.7" cy="6.8" r="1.7" fill="#3b4348"/></svg>
<div class="t" style="left:798.6px;top:205.31px;font-size:9.5px;color:#fff;transform:scaleX(0.978);">Offset:</div>
<div class="cb" style="left:850.7px;top:203.5px;width:78.7px;height:12.9px;"></div>
<div class="t" style="left:852.3px;top:205.31px;font-size:9.5px;color:#fff;transform:scaleX(1.066);word-spacing:1px;">0 V</div>
<div class="a" style="left:917.3px;top:203.5px;width:12.1px;height:12.9px;background:#666;border:1px solid #3d3d3d;border-radius:0 2px 2px 0"></div>
<div class="ar" style="left:920.4px;top:208.55px;border-top-color:#ececec"></div>
<div class="t" style="left:798.6px;top:220.51px;font-size:9.5px;color:#fff;transform:scaleX(0.862);">Range:</div>
<div class="cb" style="left:850.7px;top:218.8px;width:78.7px;height:12.7px;"></div>
<div class="t" style="left:852.3px;top:220.51px;font-size:9.5px;color:#fff;transform:scaleX(1.057);word-spacing:1px;">2 V/div</div>
<div class="a" style="left:917.3px;top:218.8px;width:12.1px;height:12.7px;background:#666;border:1px solid #3d3d3d;border-radius:0 2px 2px 0"></div>
<div class="ar" style="left:920.4px;top:223.75px;border-top-color:#ececec"></div>
<div class="a" style="left:794.2px;top:235.7px;width:139.6px;height:49.7px;border:2.2px solid #0a0af2;background:#555"></div>
<div class="a" style="left:797.6px;top:240.9px;width:9.6px;height:10.2px;background:#5c5c5c;border-radius:1px"></div>
<svg class="a" style="left:798.6px;top:241.9px" width="8" height="8.6" viewBox="0 0 8 8.6"><path d="M0.8 4.4 L2.8 7.6 L7.2 0.8" fill="none" stroke="#fff" stroke-width="1.4"/></svg>
<div class="t" style="left:811.3px;top:241.46px;font-size:9.5px;color:#fff;transform:scaleX(0.910);">Channel 2</div>
<div class="btn" style="left:913px;top:239.9px;width:16.4px;height:12px;background:#5e5e5e"></div>
<svg class="a" style="left:916px;top:240.3px" width="11" height="11" viewBox="0 0 13.2 13.4"><path d="M5.46 2.35 L5.51 0.90 L7.69 0.90 L7.74 2.35 L8.88 2.82 L9.93 1.83 L11.47 3.37 L10.48 4.42 L10.95 5.56 L12.40 5.61 L12.40 7.79 L10.95 7.84 L10.48 8.98 L11.47 10.03 L9.93 11.57 L8.88 10.58 L7.74 11.05 L7.69 12.50 L5.51 12.50 L5.46 11.05 L4.32 10.58 L3.27 11.57 L1.73 10.03 L2.72 8.98 L2.25 7.84 L0.80 7.79 L0.80 5.61 L2.25 5.56 L2.72 4.42 L1.73 3.37 L3.27 1.83 L4.32 2.82 Z" fill="#edf1f3" stroke="#2a2f33" stroke-width="0.6" stroke-linejoin="round"/><circle cx="6.7" cy="6.8" r="1.7" fill="#3b4348"/></svg>
<div class="t" style="left:798.6px;top:256.21px;font-size:9.5px;color:#fff;transform:scaleX(0.978);">Offset:</div>
<div class="cb" style="left:850.7px;top:254.3px;width:78.7px;height:13.1px;"></div>
<div class="t" style="left:852.3px;top:256.21px;font-size:9.5px;color:#fff;transform:scaleX(0.984);word-spacing:1px;">−8 V</div>
<div class="a" style="left:917.3px;top:254.3px;width:12.1px;height:13.1px;background:#666;border:1px solid #3d3d3d;border-radius:0 2px 2px 0"></div>
<div class="ar" style="left:920.4px;top:259.45px;border-top-color:#ececec"></div>
<div class="t" style="left:798.6px;top:271.51px;font-size:9.5px;color:#fff;transform:scaleX(0.862);">Range:</div>
<div class="cb" style="left:850.7px;top:269.8px;width:78.7px;height:12.7px;"></div>
<div class="t" style="left:852.3px;top:271.51px;font-size:9.5px;color:#fff;transform:scaleX(1.057);word-spacing:1px;">2 V/div</div>
<div class="a" style="left:917.3px;top:269.8px;width:12.1px;height:12.7px;background:#666;border:1px solid #3d3d3d;border-radius:0 2px 2px 0"></div>
<div class="ar" style="left:920.4px;top:274.75px;border-top-color:#ececec"></div>
<div class="a" style="left:935.2px;top:100.5px;width:10.3px;height:391.5px;background:#a9a9a9"></div>
<div class="a" style="left:935.2px;top:100.5px;width:10.3px;height:9.5px;background:#555;border:1px solid #a0a0a0"></div>
<div class="a" style="left:935.2px;top:482.6px;width:10.3px;height:9.4px;background:#555;border:1px solid #a0a0a0"></div>
<svg class="a" style="left:937.2px;top:103.4px" width="6.4" height="3.8" viewBox="0 0 7 4"><path d="M0 4 L3.5 0 L7 4 Z" fill="#f0f0f0"/></svg>
<svg class="a" style="left:937.2px;top:485.6px" width="6.4" height="3.8" viewBox="0 0 7 4"><path d="M0 0 L3.5 4 L7 0 Z" fill="#f0f0f0"/></svg>
<div class="a" style="left:0px;top:356.2px;width:791px;height:138.1px;background:#555"></div>
<svg class="a" style="left:391px;top:357.5px" width="12" height="2" viewBox="0 0 12 2"><path d="M0 1 H12" stroke="#9a9a9a" stroke-width="1" stroke-dasharray="1 1"/></svg>
<svg class="a" style="left:6.8px;top:367.2px" width="9.4" height="9.4" viewBox="0 0 9.4 9.4"><path d="M4.7 0.2 V9.2 M0.2 4.7 H9.2" stroke="#56c83c" stroke-width="2.4"/></svg>
<div class="ar" style="left:26.6px;top:374.8px;border-top-color:#ececec"></div>
<div class="a" style="left:38.2px;top:369.8px;width:8.8px;height:3px;background:#e0262c;border-radius:1px"></div>
<div class="ar" style="left:57.9px;top:374.8px;border-top-color:#ececec"></div>
<div class="a" style="left:71px;top:365.8px;width:10px;height:12.2px;background:#f0f3fa;border:1px solid #c4cede"></div>
<svg class="a" style="left:71px;top:365.8px" width="10" height="12.2" viewBox="0 0 10 12.2"><path d="M2.2 2.2 L8.4 10.6" stroke="#e2b52a" stroke-width="1.25"/></svg>
<div class="ar" style="left:88.9px;top:374.8px;border-top-color:#ececec"></div>
<div class="t" style="left:103.2px;top:367.68px;font-size:9px;color:#dcdcdc;transform:scaleX(0.800);">T</div>
<div class="ar" style="left:113.6px;top:373px;border-top-color:#ececec"></div>
<div class="t" style="left:126.9px;top:367.76px;font-size:9.5px;color:#fff;transform:scaleX(0.882);">Simple</div>
<div class="t" style="left:166px;top:367.76px;font-size:9.5px;color:#fff;transform:scaleX(0.884);">Pulse</div>
<div class="t" style="left:200.5px;top:367.76px;font-size:9.5px;color:#fff;transform:scaleX(0.984);">Protocol</div>
<div class="ar" style="left:236.4px;top:373.2px;border-top-color:#ececec"></div>
<svg class="a" style="left:249px;top:368.8px" width="9" height="5.4" viewBox="0 0 9 5.4"><path d="M0 2.7 L3.4 0.2 V1.9 H9 V3.5 H3.4 V5.2 Z" fill="#5bc843"/></svg>
<svg class="a" style="left:775.5px;top:365.5px" width="10" height="10.5" viewBox="0 0 10 10.5"><path d="M0.8 0.8 L9.2 9.7 M9.2 0.8 L0.8 9.7" stroke="#c81e1e" stroke-width="1.3"/></svg>
<div class="a" style="left:1px;top:382.5px;width:756.2px;height:16.2px;background:linear-gradient(#575757,#4e4e4e);border-top:1px solid #8e8e8e"></div>
<div class="t" style="left:35.7px;top:386.56px;font-size:9.5px;color:#fff;transform:scaleX(0.987);">Name</div>
<div class="t" style="left:110.3px;top:386.56px;font-size:9.5px;color:#fff;transform:scaleX(0.940);">Pin</div>
<div class="t" style="left:138.7px;top:386.76px;font-size:9.5px;color:#fff;transform:scaleX(0.810);">T</div>
<div class="t" style="left:151px;top:387.71px;font-size:9.5px;color:#f2f2f2;font-family:'Liberation Mono', monospace;transform:scaleX(0.994);-webkit-text-stroke:0.3px #f2f2f2;">4096 samples at 800 kHz |</div>
<div class="a" style="left:12.7px;top:383.5px;width:1px;height:15.2px;background:#6a6a6a"></div>
<div class="a" style="left:82.7px;top:383.5px;width:1px;height:15.2px;background:#6a6a6a"></div>
<div class="a" style="left:97.7px;top:383.5px;width:1px;height:15.2px;background:#6a6a6a"></div>
<div class="a" style="left:132.1px;top:383.5px;width:1px;height:15.2px;background:#6a6a6a"></div>
<div class="a" style="left:148.5px;top:383.5px;width:1px;height:15.2px;background:#6a6a6a"></div>
<div class="a" style="left:1px;top:398.7px;width:148.2px;height:20.5px;background:#ffffff"></div>
<div class="a" style="left:169.3px;top:398.7px;width:587.9px;height:20.5px;background:#ffffff"></div>
<div class="a" style="left:1px;top:419.2px;width:148.2px;height:20.5px;background:#f5f5f5"></div>
<div class="a" style="left:169.3px;top:419.2px;width:587.9px;height:20.5px;background:#f5f5f5"></div>
<div class="a" style="left:1px;top:439.7px;width:148.2px;height:20.2px;background:#4169e1"></div>
<div class="a" style="left:169.3px;top:439.7px;width:587.9px;height:20.2px;background:#4169e1"></div>
<div class="a" style="left:1px;top:459.9px;width:148.2px;height:17.1px;background:#f5f5f5"></div>
<div class="a" style="left:169.3px;top:459.9px;width:587.9px;height:17.1px;background:#f5f5f5"></div>
<div class="a" style="left:98.4px;top:398.7px;width:34.2px;height:20.5px;background:#555"></div>
<div class="a" style="left:98.4px;top:439.7px;width:34.2px;height:20.2px;background:#555"></div>
<div class="a" style="left:98.4px;top:419.2px;width:34.2px;height:20.5px;background:#8b008b"></div>
<div class="a" style="left:98.4px;top:459.9px;width:34.2px;height:17.1px;background:#078a07"></div>
<div class="t" style="left:105.5px;top:424.76px;font-size:9.5px;color:#f0f0f0;transform:scaleX(0.958);">DIO&nbsp; 2</div>
<div class="t" style="left:105.5px;top:465.36px;font-size:9.5px;color:#f0f0f0;transform:scaleX(0.911);">DIO&nbsp; 1</div>
<div class="t" style="left:4.9px;top:404.26px;font-size:9.5px;color:#222;font-weight:bold;transform:scaleX(0.919);">−</div>
<div class="t" style="left:4.9px;top:444.96px;font-size:9.5px;color:#0c0c0c;font-weight:bold;transform:scaleX(0.919);">−</div>
<div class="t" style="left:14px;top:404.56px;font-size:9.5px;color:#111;transform:scaleX(0.856);">UART</div>
<div class="t" style="left:14px;top:424.96px;font-size:9.5px;color:#111;transform:scaleX(0.897);">Data</div>
<div class="t" style="left:14px;top:445.26px;font-size:9.5px;color:#0a0a0a;transform:scaleX(0.885);">UART2</div>
<div class="t" style="left:14px;top:465.56px;font-size:9.5px;color:#111;transform:scaleX(0.897);">Data</div>
<div class="a" style="left:86px;top:400.4px;width:9.4px;height:12px;background:#e4ebf7;border:1px solid #b4c0d4"></div>
<svg class="a" style="left:86px;top:400.4px" width="9.4" height="12" viewBox="0 0 9.4 12"><path d="M2 2.2 L7.6 10" stroke="#dcae14" stroke-width="1.4"/></svg>
<div class="a" style="left:86px;top:441.2px;width:9.4px;height:12px;background:#e4ebf7;border:1px solid #b4c0d4"></div>
<svg class="a" style="left:86px;top:441.2px" width="9.4" height="12" viewBox="0 0 9.4 12"><path d="M2 2.2 L7.6 10" stroke="#dcae14" stroke-width="1.4"/></svg>
<div class="a" style="left:12.7px;top:398.7px;width:1px;height:78.3px;background:rgba(110,110,110,0.3)"></div>
<div class="a" style="left:82.7px;top:398.7px;width:1px;height:78.3px;background:rgba(110,110,110,0.3)"></div>
<div class="a" style="left:1px;top:418.6px;width:756.2px;height:1.2px;background:rgba(140,140,140,0.32)"></div>
<div class="a" style="left:1px;top:439.1px;width:756.2px;height:1.2px;background:rgba(140,140,140,0.32)"></div>
<div class="a" style="left:1px;top:459.3px;width:756.2px;height:1.2px;background:rgba(140,140,140,0.32)"></div>
<div class="a" style="left:149.2px;top:398.7px;width:20.1px;height:78.3px;background:#555"></div>
<div class="a" style="left:98.4px;top:418.7px;width:70.9px;height:1px;background:rgba(255,255,255,0.13)"></div>
<div class="a" style="left:98.4px;top:439.2px;width:70.9px;height:1px;background:rgba(255,255,255,0.13)"></div>
<div class="a" style="left:98.4px;top:459.4px;width:70.9px;height:1px;background:rgba(255,255,255,0.13)"></div>
<svg class="a" style="left:169.3px;top:398.7px" width="587.9" height="78.3" viewBox="175.3 398.7 587.9 78.3"><path d="M189.6 398.7 V477" stroke="#c4c4c4" stroke-width="1" stroke-dasharray="1 1.4"/><path d="M263.4 398.7 V477" stroke="#c4c4c4" stroke-width="1" stroke-dasharray="1 1.4"/><path d="M337.2 398.7 V477" stroke="#c4c4c4" stroke-width="1" stroke-dasharray="1 1.4"/><path d="M410.9 398.7 V477" stroke="#c4c4c4" stroke-width="1" stroke-dasharray="1 1.4"/><path d="M484.7 398.7 V477" stroke="#c4c4c4" stroke-width="1" stroke-dasharray="1 1.4"/><path d="M558.5 398.7 V477" stroke="#c4c4c4" stroke-width="1" stroke-dasharray="1 1.4"/><path d="M632.3 398.7 V477" stroke="#c4c4c4" stroke-width="1" stroke-dasharray="1 1.4"/><path d="M706.1 398.7 V477" stroke="#c4c4c4" stroke-width="1" stroke-dasharray="1 1.4"/><path d="M175.3 409.4 H189.4" stroke="#111" stroke-width="1.1"/><rect x="189.4" y="401" width="212.2" height="16.8" fill="#fff" stroke="#9a9a9a" stroke-width="1.2"/><text x="191" y="412.8" font-size="9.5" fill="#111" font-family='"Liberation Sans", sans-serif' textLength="26.5" lengthAdjust="spacingAndGlyphs">h31[1]</text><path d="M401.6 409.4 H411" stroke="#111" stroke-width="1.1"/><rect x="411" y="401" width="213" height="16.8" fill="#fff" stroke="#9a9a9a" stroke-width="1.2"/><text x="412.6" y="412.8" font-size="9.5" fill="#111" font-family='"Liberation Sans", sans-serif' textLength="26.5" lengthAdjust="spacingAndGlyphs">h32[2]</text><path d="M624 409.4 H633.4" stroke="#111" stroke-width="1.1"/><rect x="633.4" y="401" width="135.8" height="16.8" fill="#fff" stroke="#9a9a9a" stroke-width="1.2"/><text x="635" y="412.8" font-size="9.5" fill="#111" font-family='"Liberation Sans", sans-serif' textLength="26.5" lengthAdjust="spacingAndGlyphs">h33[3]</text><path d="M175.3 450 H189.4" stroke="#111" stroke-width="1.1"/><rect x="189.4" y="441.6" width="212.2" height="16.8" fill="#4169e1" stroke="#2f4fae" stroke-width="1.2"/><text x="191" y="453.4" font-size="9.5" fill="#0a0a0a" font-family='"Liberation Sans", sans-serif' textLength="26.5" lengthAdjust="spacingAndGlyphs">h31[1]</text><path d="M401.6 450 H411" stroke="#111" stroke-width="1.1"/><rect x="411" y="441.6" width="213" height="16.8" fill="#4169e1" stroke="#2f4fae" stroke-width="1.2"/><text x="412.6" y="453.4" font-size="9.5" fill="#0a0a0a" font-family='"Liberation Sans", sans-serif' textLength="26.5" lengthAdjust="spacingAndGlyphs">h32[2]</text><path d="M624 450 H633.4" stroke="#111" stroke-width="1.1"/><rect x="633.4" y="441.6" width="135.8" height="16.8" fill="#4169e1" stroke="#2f4fae" stroke-width="1.2"/><text x="635" y="453.4" font-size="9.5" fill="#0a0a0a" font-family='"Liberation Sans", sans-serif' textLength="26.5" lengthAdjust="spacingAndGlyphs">h33[3]</text><path d="M175.3 421.1 L189.3 421.1 L189.3 438.2 L211.23 438.2 L211.23 421.1 L233.16 421.1 L233.16 438.2 L298.95 438.2 L298.95 421.1 L342.81 421.1 L342.81 438.2 L386.67 438.2 L386.67 421.1 L411.5 421.1 L411.5 438.2 L455.36 438.2 L455.36 421.1 L477.29 421.1 L477.29 438.2 L521.15 438.2 L521.15 421.1 L565.01 421.1 L565.01 438.2 L608.87 438.2 L608.87 421.1 L634 421.1 L634 438.2 L655.93 438.2 L655.93 421.1 L699.79 421.1 L699.79 438.2 L743.65 438.2 L743.65 421.1 L763.2 421.1" fill="none" stroke="#5c5c5c" stroke-width="1.15"/><text x="190" y="433.2" font-size="9.5" fill="#f21c1c" font-family='"Liberation Sans", sans-serif' textLength="19.8" lengthAdjust="spacingAndGlyphs">Start</text><path d="M211.35 419.7 V439.2" stroke="#ee2020" stroke-width="1" stroke-dasharray="1.8 1.3"/><text x="212.25" y="433.2" font-size="9.5" fill="#f21c1c" font-family='"Liberation Sans", sans-serif' textLength="4.8" lengthAdjust="spacingAndGlyphs">0</text><path d="M233.6 419.7 V439.2" stroke="#ee2020" stroke-width="1" stroke-dasharray="1.8 1.3"/><text x="234.5" y="433.2" font-size="9.5" fill="#f21c1c" font-family='"Liberation Sans", sans-serif' textLength="4.8" lengthAdjust="spacingAndGlyphs">1</text><path d="M255.85 419.7 V439.2" stroke="#ee2020" stroke-width="1" stroke-dasharray="1.8 1.3"/><text x="256.75" y="433.2" font-size="9.5" fill="#f21c1c" font-family='"Liberation Sans", sans-serif' textLength="4.8" lengthAdjust="spacingAndGlyphs">2</text><path d="M278.1 419.7 V439.2" stroke="#ee2020" stroke-width="1" stroke-dasharray="1.8 1.3"/><text x="279" y="433.2" font-size="9.5" fill="#f21c1c" font-family='"Liberation Sans", sans-serif' textLength="4.8" lengthAdjust="spacingAndGlyphs">3</text><path d="M300.35 419.7 V439.2" stroke="#ee2020" stroke-width="1" stroke-dasharray="1.8 1.3"/><text x="301.25" y="433.2" font-size="9.5" fill="#f21c1c" font-family='"Liberation Sans", sans-serif' textLength="4.8" lengthAdjust="spacingAndGlyphs">4</text><path d="M322.6 419.7 V439.2" stroke="#ee2020" stroke-width="1" stroke-dasharray="1.8 1.3"/><text x="323.5" y="433.2" font-size="9.5" fill="#f21c1c" font-family='"Liberation Sans", sans-serif' textLength="4.8" lengthAdjust="spacingAndGlyphs">5</text><path d="M344.85 419.7 V439.2" stroke="#ee2020" stroke-width="1" stroke-dasharray="1.8 1.3"/><text x="345.75" y="433.2" font-size="9.5" fill="#f21c1c" font-family='"Liberation Sans", sans-serif' textLength="4.8" lengthAdjust="spacingAndGlyphs">6</text><path d="M367.1 419.7 V439.2" stroke="#ee2020" stroke-width="1" stroke-dasharray="1.8 1.3"/><text x="368" y="433.2" font-size="9.5" fill="#f21c1c" font-family='"Liberation Sans", sans-serif' textLength="4.8" lengthAdjust="spacingAndGlyphs">7</text><path d="M389.35 419.7 V439.2" stroke="#ee2020" stroke-width="1" stroke-dasharray="1.8 1.3"/><path d="M400.775 419.7 V439.2" stroke="#ee2020" stroke-width="1" stroke-dasharray="1.8 1.3"/><text x="390.25" y="433.2" font-size="9.5" fill="#f21c1c" font-family='"Liberation Sans", sans-serif' textLength="18.5" lengthAdjust="spacingAndGlyphs">Stop</text><text x="411.6" y="433.2" font-size="9.5" fill="#f21c1c" font-family='"Liberation Sans", sans-serif' textLength="19.8" lengthAdjust="spacingAndGlyphs">Start</text><path d="M432.95 419.7 V439.2" stroke="#ee2020" stroke-width="1" stroke-dasharray="1.8 1.3"/><text x="433.85" y="433.2" font-size="9.5" fill="#f21c1c" font-family='"Liberation Sans", sans-serif' textLength="4.8" lengthAdjust="spacingAndGlyphs">0</text><path d="M455.2 419.7 V439.2" stroke="#ee2020" stroke-width="1" stroke-dasharray="1.8 1.3"/><text x="456.1" y="433.2" font-size="9.5" fill="#f21c1c" font-family='"Liberation Sans", sans-serif' textLength="4.8" lengthAdjust="spacingAndGlyphs">1</text><path d="M477.45 419.7 V439.2" stroke="#ee2020" stroke-width="1" stroke-dasharray="1.8 1.3"/><text x="478.35" y="433.2" font-size="9.5" fill="#f21c1c" font-family='"Liberation Sans", sans-serif' textLength="4.8" lengthAdjust="spacingAndGlyphs">2</text><path d="M499.7 419.7 V439.2" stroke="#ee2020" stroke-width="1" stroke-dasharray="1.8 1.3"/><text x="500.6" y="433.2" font-size="9.5" fill="#f21c1c" font-family='"Liberation Sans", sans-serif' textLength="4.8" lengthAdjust="spacingAndGlyphs">3</text><path d="M521.95 419.7 V439.2" stroke="#ee2020" stroke-width="1" stroke-dasharray="1.8 1.3"/><text x="522.85" y="433.2" font-size="9.5" fill="#f21c1c" font-family='"Liberation Sans", sans-serif' textLength="4.8" lengthAdjust="spacingAndGlyphs">4</text><path d="M544.2 419.7 V439.2" stroke="#ee2020" stroke-width="1" stroke-dasharray="1.8 1.3"/><text x="545.1" y="433.2" font-size="9.5" fill="#f21c1c" font-family='"Liberation Sans", sans-serif' textLength="4.8" lengthAdjust="spacingAndGlyphs">5</text><path d="M566.45 419.7 V439.2" stroke="#ee2020" stroke-width="1" stroke-dasharray="1.8 1.3"/><text x="567.35" y="433.2" font-size="9.5" fill="#f21c1c" font-family='"Liberation Sans", sans-serif' textLength="4.8" lengthAdjust="spacingAndGlyphs">6</text><path d="M588.7 419.7 V439.2" stroke="#ee2020" stroke-width="1" stroke-dasharray="1.8 1.3"/><text x="589.6" y="433.2" font-size="9.5" fill="#f21c1c" font-family='"Liberation Sans", sans-serif' textLength="4.8" lengthAdjust="spacingAndGlyphs">7</text><path d="M610.95 419.7 V439.2" stroke="#ee2020" stroke-width="1" stroke-dasharray="1.8 1.3"/><path d="M622.375 419.7 V439.2" stroke="#ee2020" stroke-width="1" stroke-dasharray="1.8 1.3"/><text x="611.85" y="433.2" font-size="9.5" fill="#f21c1c" font-family='"Liberation Sans", sans-serif' textLength="18.5" lengthAdjust="spacingAndGlyphs">Stop</text><text x="634" y="433.2" font-size="9.5" fill="#f21c1c" font-family='"Liberation Sans", sans-serif' textLength="19.8" lengthAdjust="spacingAndGlyphs">Start</text><path d="M655.35 419.7 V439.2" stroke="#ee2020" stroke-width="1" stroke-dasharray="1.8 1.3"/><text x="656.25" y="433.2" font-size="9.5" fill="#f21c1c" font-family='"Liberation Sans", sans-serif' textLength="4.8" lengthAdjust="spacingAndGlyphs">0</text><path d="M677.6 419.7 V439.2" stroke="#ee2020" stroke-width="1" stroke-dasharray="1.8 1.3"/><text x="678.5" y="433.2" font-size="9.5" fill="#f21c1c" font-family='"Liberation Sans", sans-serif' textLength="4.8" lengthAdjust="spacingAndGlyphs">1</text><path d="M699.85 419.7 V439.2" stroke="#ee2020" stroke-width="1" stroke-dasharray="1.8 1.3"/><text x="700.75" y="433.2" font-size="9.5" fill="#f21c1c" font-family='"Liberation Sans", sans-serif' textLength="4.8" lengthAdjust="spacingAndGlyphs">2</text><path d="M722.1 419.7 V439.2" stroke="#ee2020" stroke-width="1" stroke-dasharray="1.8 1.3"/><text x="723" y="433.2" font-size="9.5" fill="#f21c1c" font-family='"Liberation Sans", sans-serif' textLength="4.8" lengthAdjust="spacingAndGlyphs">3</text><path d="M744.35 419.7 V439.2" stroke="#ee2020" stroke-width="1" stroke-dasharray="1.8 1.3"/><text x="745.25" y="433.2" font-size="9.5" fill="#f21c1c" font-family='"Liberation Sans", sans-serif' textLength="4.8" lengthAdjust="spacingAndGlyphs">4</text><path d="M175.3 461.8 L189.3 461.8 L189.3 478.9 L211.23 478.9 L211.23 461.8 L233.16 461.8 L233.16 478.9 L298.95 478.9 L298.95 461.8 L342.81 461.8 L342.81 478.9 L386.67 478.9 L386.67 461.8 L411.5 461.8 L411.5 478.9 L455.36 478.9 L455.36 461.8 L477.29 461.8 L477.29 478.9 L521.15 478.9 L521.15 461.8 L565.01 461.8 L565.01 478.9 L608.87 478.9 L608.87 461.8 L634 461.8 L634 478.9 L655.93 478.9 L655.93 461.8 L699.79 461.8 L699.79 478.9 L743.65 478.9 L743.65 461.8 L763.2 461.8" fill="none" stroke="#5c5c5c" stroke-width="1.15"/><text x="190" y="473.9" font-size="9.5" fill="#f21c1c" font-family='"Liberation Sans", sans-serif' textLength="19.8" lengthAdjust="spacingAndGlyphs">Start</text><path d="M211.35 460.4 V479.9" stroke="#ee2020" stroke-width="1" stroke-dasharray="1.8 1.3"/><text x="212.25" y="473.9" font-size="9.5" fill="#f21c1c" font-family='"Liberation Sans", sans-serif' textLength="4.8" lengthAdjust="spacingAndGlyphs">0</text><path d="M233.6 460.4 V479.9" stroke="#ee2020" stroke-width="1" stroke-dasharray="1.8 1.3"/><text x="234.5" y="473.9" font-size="9.5" fill="#f21c1c" font-family='"Liberation Sans", sans-serif' textLength="4.8" lengthAdjust="spacingAndGlyphs">1</text><path d="M255.85 460.4 V479.9" stroke="#ee2020" stroke-width="1" stroke-dasharray="1.8 1.3"/><text x="256.75" y="473.9" font-size="9.5" fill="#f21c1c" font-family='"Liberation Sans", sans-serif' textLength="4.8" lengthAdjust="spacingAndGlyphs">2</text><path d="M278.1 460.4 V479.9" stroke="#ee2020" stroke-width="1" stroke-dasharray="1.8 1.3"/><text x="279" y="473.9" font-size="9.5" fill="#f21c1c" font-family='"Liberation Sans", sans-serif' textLength="4.8" lengthAdjust="spacingAndGlyphs">3</text><path d="M300.35 460.4 V479.9" stroke="#ee2020" stroke-width="1" stroke-dasharray="1.8 1.3"/><text x="301.25" y="473.9" font-size="9.5" fill="#f21c1c" font-family='"Liberation Sans", sans-serif' textLength="4.8" lengthAdjust="spacingAndGlyphs">4</text><path d="M322.6 460.4 V479.9" stroke="#ee2020" stroke-width="1" stroke-dasharray="1.8 1.3"/><text x="323.5" y="473.9" font-size="9.5" fill="#f21c1c" font-family='"Liberation Sans", sans-serif' textLength="4.8" lengthAdjust="spacingAndGlyphs">5</text><path d="M344.85 460.4 V479.9" stroke="#ee2020" stroke-width="1" stroke-dasharray="1.8 1.3"/><text x="345.75" y="473.9" font-size="9.5" fill="#f21c1c" font-family='"Liberation Sans", sans-serif' textLength="4.8" lengthAdjust="spacingAndGlyphs">6</text><path d="M367.1 460.4 V479.9" stroke="#ee2020" stroke-width="1" stroke-dasharray="1.8 1.3"/><text x="368" y="473.9" font-size="9.5" fill="#f21c1c" font-family='"Liberation Sans", sans-serif' textLength="4.8" lengthAdjust="spacingAndGlyphs">7</text><path d="M389.35 460.4 V479.9" stroke="#ee2020" stroke-width="1" stroke-dasharray="1.8 1.3"/><path d="M400.775 460.4 V479.9" stroke="#ee2020" stroke-width="1" stroke-dasharray="1.8 1.3"/><text x="390.25" y="473.9" font-size="9.5" fill="#f21c1c" font-family='"Liberation Sans", sans-serif' textLength="18.5" lengthAdjust="spacingAndGlyphs">Stop</text><text x="411.6" y="473.9" font-size="9.5" fill="#f21c1c" font-family='"Liberation Sans", sans-serif' textLength="19.8" lengthAdjust="spacingAndGlyphs">Start</text><path d="M432.95 460.4 V479.9" stroke="#ee2020" stroke-width="1" stroke-dasharray="1.8 1.3"/><text x="433.85" y="473.9" font-size="9.5" fill="#f21c1c" font-family='"Liberation Sans", sans-serif' textLength="4.8" lengthAdjust="spacingAndGlyphs">0</text><path d="M455.2 460.4 V479.9" stroke="#ee2020" stroke-width="1" stroke-dasharray="1.8 1.3"/><text x="456.1" y="473.9" font-size="9.5" fill="#f21c1c" font-family='"Liberation Sans", sans-serif' textLength="4.8" lengthAdjust="spacingAndGlyphs">1</text><path d="M477.45 460.4 V479.9" stroke="#ee2020" stroke-width="1" stroke-dasharray="1.8 1.3"/><text x="478.35" y="473.9" font-size="9.5" fill="#f21c1c" font-family='"Liberation Sans", sans-serif' textLength="4.8" lengthAdjust="spacingAndGlyphs">2</text><path d="M499.7 460.4 V479.9" stroke="#ee2020" stroke-width="1" stroke-dasharray="1.8 1.3"/><text x="500.6" y="473.9" font-size="9.5" fill="#f21c1c" font-family='"Liberation Sans", sans-serif' textLength="4.8" lengthAdjust="spacingAndGlyphs">3</text><path d="M521.95 460.4 V479.9" stroke="#ee2020" stroke-width="1" stroke-dasharray="1.8 1.3"/><text x="522.85" y="473.9" font-size="9.5" fill="#f21c1c" font-family='"Liberation Sans", sans-serif' textLength="4.8" lengthAdjust="spacingAndGlyphs">4</text><path d="M544.2 460.4 V479.9" stroke="#ee2020" stroke-width="1" stroke-dasharray="1.8 1.3"/><text x="545.1" y="473.9" font-size="9.5" fill="#f21c1c" font-family='"Liberation Sans", sans-serif' textLength="4.8" lengthAdjust="spacingAndGlyphs">5</text><path d="M566.45 460.4 V479.9" stroke="#ee2020" stroke-width="1" stroke-dasharray="1.8 1.3"/><text x="567.35" y="473.9" font-size="9.5" fill="#f21c1c" font-family='"Liberation Sans", sans-serif' textLength="4.8" lengthAdjust="spacingAndGlyphs">6</text><path d="M588.7 460.4 V479.9" stroke="#ee2020" stroke-width="1" stroke-dasharray="1.8 1.3"/><text x="589.6" y="473.9" font-size="9.5" fill="#f21c1c" font-family='"Liberation Sans", sans-serif' textLength="4.8" lengthAdjust="spacingAndGlyphs">7</text><path d="M610.95 460.4 V479.9" stroke="#ee2020" stroke-width="1" stroke-dasharray="1.8 1.3"/><path d="M622.375 460.4 V479.9" stroke="#ee2020" stroke-width="1" stroke-dasharray="1.8 1.3"/><text x="611.85" y="473.9" font-size="9.5" fill="#f21c1c" font-family='"Liberation Sans", sans-serif' textLength="18.5" lengthAdjust="spacingAndGlyphs">Stop</text><text x="634" y="473.9" font-size="9.5" fill="#f21c1c" font-family='"Liberation Sans", sans-serif' textLength="19.8" lengthAdjust="spacingAndGlyphs">Start</text><path d="M655.35 460.4 V479.9" stroke="#ee2020" stroke-width="1" stroke-dasharray="1.8 1.3"/><text x="656.25" y="473.9" font-size="9.5" fill="#f21c1c" font-family='"Liberation Sans", sans-serif' textLength="4.8" lengthAdjust="spacingAndGlyphs">0</text><path d="M677.6 460.4 V479.9" stroke="#ee2020" stroke-width="1" stroke-dasharray="1.8 1.3"/><text x="678.5" y="473.9" font-size="9.5" fill="#f21c1c" font-family='"Liberation Sans", sans-serif' textLength="4.8" lengthAdjust="spacingAndGlyphs">1</text><path d="M699.85 460.4 V479.9" stroke="#ee2020" stroke-width="1" stroke-dasharray="1.8 1.3"/><text x="700.75" y="473.9" font-size="9.5" fill="#f21c1c" font-family='"Liberation Sans", sans-serif' textLength="4.8" lengthAdjust="spacingAndGlyphs">2</text><path d="M722.1 460.4 V479.9" stroke="#ee2020" stroke-width="1" stroke-dasharray="1.8 1.3"/><text x="723" y="473.9" font-size="9.5" fill="#f21c1c" font-family='"Liberation Sans", sans-serif' textLength="4.8" lengthAdjust="spacingAndGlyphs">3</text><path d="M744.35 460.4 V479.9" stroke="#ee2020" stroke-width="1" stroke-dasharray="1.8 1.3"/><text x="745.25" y="473.9" font-size="9.5" fill="#f21c1c" font-family='"Liberation Sans", sans-serif' textLength="4.8" lengthAdjust="spacingAndGlyphs">4</text></svg>
<div class="btn" style="left:760px;top:384.3px;width:16.4px;height:13.7px;background:#5e5e5e"></div>
<svg class="a" style="left:763px;top:385.5px" width="11" height="11" viewBox="0 0 13.2 13.4"><path d="M5.46 2.35 L5.51 0.90 L7.69 0.90 L7.74 2.35 L8.88 2.82 L9.93 1.83 L11.47 3.37 L10.48 4.42 L10.95 5.56 L12.40 5.61 L12.40 7.79 L10.95 7.84 L10.48 8.98 L11.47 10.03 L9.93 11.57 L8.88 10.58 L7.74 11.05 L7.69 12.50 L5.51 12.50 L5.46 11.05 L4.32 10.58 L3.27 11.57 L1.73 10.03 L2.72 8.98 L2.25 7.84 L0.80 7.79 L0.80 5.61 L2.25 5.56 L2.72 4.42 L1.73 3.37 L3.27 1.83 L4.32 2.82 Z" fill="#edf1f3" stroke="#2a2f33" stroke-width="0.6" stroke-linejoin="round"/><circle cx="6.7" cy="6.8" r="1.7" fill="#3b4348"/></svg>
<div class="a" style="left:779px;top:383.6px;width:10.5px;height:92.6px;background:#555;border:1px solid #a4a4a4"></div>
<div class="a" style="left:779px;top:394px;width:10.5px;height:52px;background:#565656;border:1px solid #b0b0b0;border-radius:1px"></div>
<div class="a" style="left:779px;top:466.3px;width:10.5px;height:9.9px;background:#555;border:1px solid #a4a4a4"></div>
<svg class="a" style="left:781.2px;top:386.8px" width="6" height="3.6" viewBox="0 0 7 4"><path d="M0 4 L3.5 0 L7 4 Z" fill="#f0f0f0"/></svg>
<svg class="a" style="left:781.2px;top:469.6px" width="6" height="3.6" viewBox="0 0 7 4"><path d="M0 0 L3.5 4 L7 0 Z" fill="#f0f0f0"/></svg>
<div class="a" style="left:0px;top:477px;width:791px;height:17.3px;background:#fff"></div>
<div class="t" style="left:23.6px;top:481.63px;font-size:9.3px;color:#1e1e1e;transform:scaleX(0.936);word-spacing:1.2px;">−0.7 ms</div>
<div class="t" style="left:94px;top:481.63px;font-size:9.3px;color:#1e1e1e;transform:scaleX(0.953);word-spacing:1.2px;">−0.35 ms</div>
<div class="t" style="left:176.5px;top:481.63px;font-size:9.3px;color:#1e1e1e;transform:scaleX(1.017);word-spacing:1.2px;">0 ms</div>
<div class="t" style="left:244px;top:481.63px;font-size:9.3px;color:#1e1e1e;transform:scaleX(0.967);word-spacing:1.2px;">0.35 ms</div>
<div class="t" style="left:321px;top:481.63px;font-size:9.3px;color:#1e1e1e;transform:scaleX(0.975);word-spacing:1.2px;">0.7 ms</div>
<div class="t" style="left:391.5px;top:481.63px;font-size:9.3px;color:#1e1e1e;transform:scaleX(0.992);word-spacing:1.2px;">1.05 ms</div>
<div class="t" style="left:468px;top:481.63px;font-size:9.3px;color:#1e1e1e;transform:scaleX(0.975);word-spacing:1.2px;">1.4 ms</div>
<div class="t" style="left:539.4px;top:481.63px;font-size:9.3px;color:#1e1e1e;transform:scaleX(0.976);word-spacing:1.2px;">1.75 ms</div>
<div class="t" style="left:616px;top:481.63px;font-size:9.3px;color:#1e1e1e;transform:scaleX(0.939);word-spacing:1.2px;">2.1 ms</div>
<div class="t" style="left:687.6px;top:481.63px;font-size:9.3px;color:#1e1e1e;transform:scaleX(0.967);word-spacing:1.2px;">2.45 ms</div>
<div class="t" style="left:763.3px;top:481.63px;font-size:9.3px;color:#1e1e1e;transform:scaleX(1.010);word-spacing:1.2px;">2.8 ms</div>
<div class="a" style="left:0.4px;top:477.2px;width:15.4px;height:17.1px;background:#585858;border:1px solid #777;border-radius:1.5px"></div>
<div class="t" style="left:4.5px;top:481.14px;font-size:10px;color:#fff;transform:scaleX(1.079);">X</div>
<div class="a" style="left:16.5px;top:477.2px;width:9.1px;height:17.1px;background:#646464;border:1px solid #7c7c7c;border-radius:1.5px"></div>
<div class="ar" style="left:17.9px;top:484.3px;border-top-color:#ececec"></div>
<svg class="a" style="left:176px;top:482.6px" width="12" height="12" viewBox="0 0 12 12"><path d="M0 12 L6 0 L12 12 Z" fill="#000"/></svg>
</div>
</body></html>
